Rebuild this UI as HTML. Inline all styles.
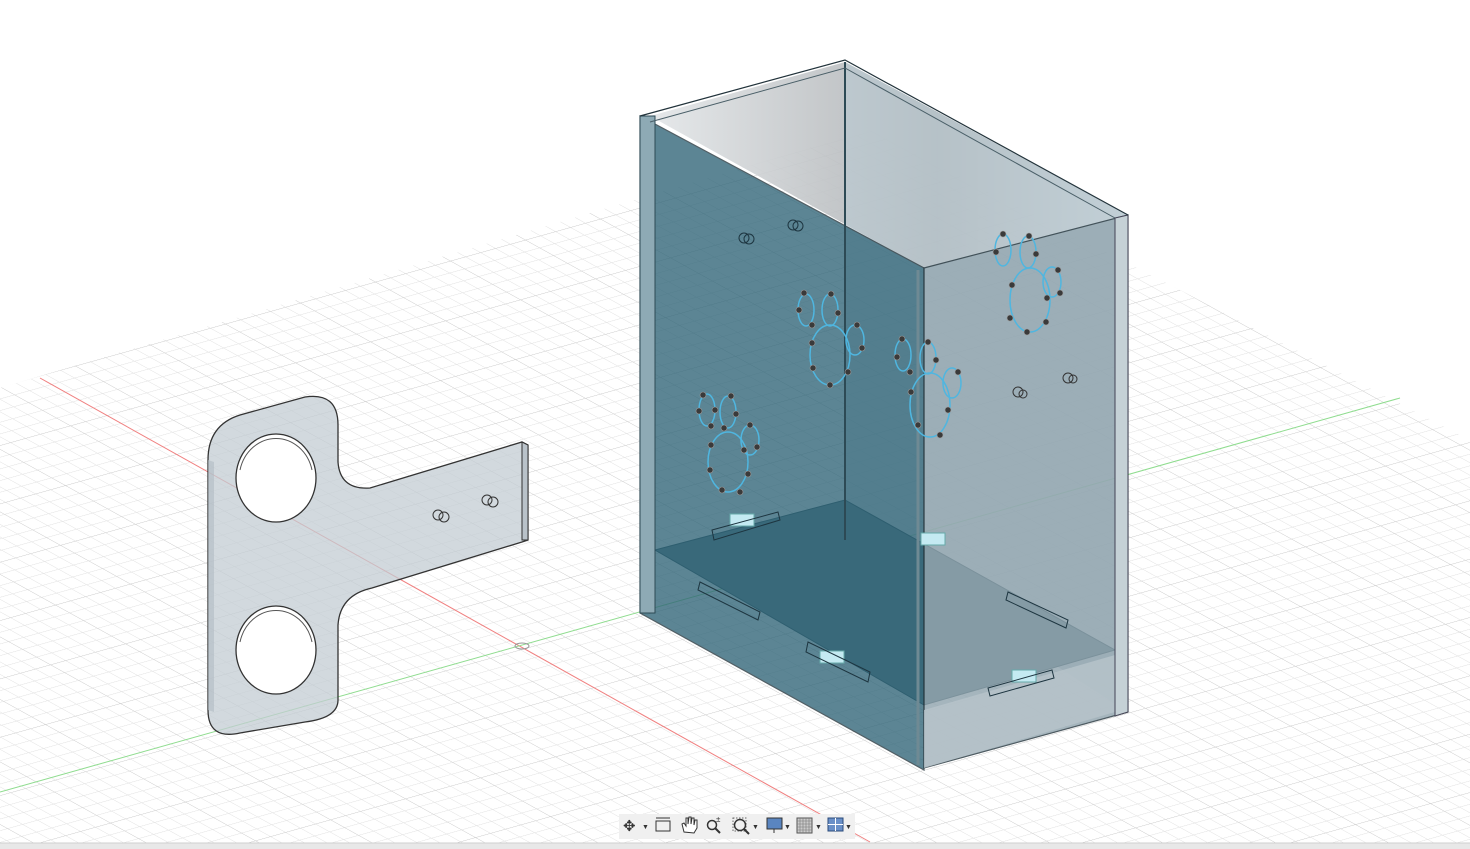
<!DOCTYPE html>
<html><head><meta charset="utf-8"><style>
html,body{margin:0;padding:0;background:#fff;width:1470px;height:849px;overflow:hidden;font-family:"Liberation Sans",sans-serif}
</style></head><body>
<svg width="1470" height="849" viewBox="0 0 1470 849" xmlns="http://www.w3.org/2000/svg" style="position:absolute;left:0;top:0">
<defs>
<pattern id="g" width="10" height="10" patternUnits="userSpaceOnUse" patternTransform="matrix(1.4,0.775,1.5,-0.42,0,387)">
<path d="M0 0H10M0 0V10" stroke="#dedede" stroke-width="0.8" fill="none"/>
</pattern>
<pattern id="G" width="50" height="50" patternUnits="userSpaceOnUse" patternTransform="matrix(1.4,0.775,1.5,-0.42,0,387)">
<path d="M0 0H50M0 0V50" stroke="#c4c4c4" stroke-width="0.5" fill="none"/>
</pattern>
<clipPath id="c"><polygon points="0,388 870,130 1470,440 1470,849 0,849"/></clipPath>
<linearGradient id="bw" x1="0" y1="0" x2="1" y2="0"><stop offset="0" stop-color="#e3e6e8"/><stop offset="0.6" stop-color="#a9adb0"/><stop offset="1" stop-color="#c9d3d8"/></linearGradient>
</defs>
<g clip-path="url(#c)">
<rect width="1470" height="849" fill="url(#g)"/>
<rect width="1470" height="849" fill="url(#G)"/>
</g>
<line x1="40" y1="378" x2="870" y2="842" stroke="#f08080" stroke-width="1"/>
<line x1="0" y1="792" x2="1400" y2="398" stroke="#8fdc8f" stroke-width="1"/>
<ellipse cx="522" cy="646" rx="7" ry="3" fill="none" stroke="#999"/>

<!-- key -->
<path d="M208 460 Q208 425 240 415 L305 397 Q338 392 338 425 L338 462 Q340 490 370 488 L522 442 L528 445 L528 540 L522 542 L372 588 Q340 595 338 625 L338 700 Q338 718 305 722 L240 733 Q208 740 208 710 Z" fill="#c3ccd3" fill-opacity="0.75" stroke="#333" stroke-width="1.3"/>
<path d="M208 460 L208 710 L214 712 L214 462 Z" fill="#b0bbc3" opacity="0.6"/>
<path d="M522 442 L528 445 L528 540 L522 540 Z" fill="#b9c2c9" stroke="#333" stroke-width="1"/>
<ellipse cx="276" cy="478" rx="40" ry="44" fill="#fff" stroke="#333" stroke-width="1.3"/>
<path d="M240 470 A37 41 0 0 1 312 470" fill="none" stroke="#555"/>
<ellipse cx="276" cy="650" rx="40" ry="44" fill="#fff" stroke="#333" stroke-width="1.3"/>
<path d="M240 642 A37 41 0 0 1 312 642" fill="none" stroke="#555"/>
<circle cx="438" cy="515" r="5" fill="none" stroke="#333"/><circle cx="444" cy="517" r="5" fill="none" stroke="#333"/>
<circle cx="487" cy="500" r="5" fill="none" stroke="#333"/><circle cx="493" cy="502" r="5" fill="none" stroke="#333"/>

<!-- box interior top -->
<polygon points="650,116 845,62 1128,215 924,268" fill="url(#bw)" opacity="0.9"/>
<polygon points="845,62 1128,215 1128,712 845,530" fill="#b9cad2" opacity="0.6"/>
<!-- floor -->
<polygon points="655,550 845,500 1115,650 924,705" fill="#5d7d88" stroke="#2d4a55"/>
<!-- left face -->
<polygon points="640,116 924,268 924,770 640,613" fill="#2f6477" opacity="0.78" stroke="#22333b" stroke-width="1.2"/>
<polygon points="640,116 655,116 655,613 640,613" fill="#8eaab5" stroke="#2d4a55"/>
<!-- right face -->
<polygon points="924,268 1128,215 1128,712 924,768" fill="#8fa3ad" opacity="0.8" stroke="#22333b" stroke-width="1.2"/>
<polygon points="924,710 1115,655 1115,712 924,768" fill="#b8c4ca" opacity="0.8"/>
<polygon points="1115,218 1128,215 1128,712 1115,716" fill="#c5d1d6" stroke="#445"/>
<line x1="845" y1="62" x2="845" y2="540" stroke="#2d4a55" stroke-width="2"/>
<polyline points="640,116 845,60 1128,215" fill="none" stroke="#22333b" stroke-width="1.2"/>
<polyline points="650,122 845,68 1115,218" fill="none" stroke="#4a5f68" stroke-width="1"/>
<line x1="918" y1="270" x2="918" y2="765" stroke="#6f8a94" stroke-width="3"/>

<!-- paws -->
<g fill="none" stroke="#4fb6e0" stroke-width="1.5">
<ellipse cx="707" cy="410" rx="8" ry="16"/><ellipse cx="728" cy="412" rx="8" ry="16"/><ellipse cx="750" cy="440" rx="9" ry="15"/><ellipse cx="728" cy="462" rx="20" ry="30"/>
<ellipse cx="806" cy="310" rx="8" ry="16"/><ellipse cx="830" cy="310" rx="8" ry="16"/><ellipse cx="855" cy="340" rx="9" ry="15"/><ellipse cx="830" cy="355" rx="20" ry="30"/>
<ellipse cx="903" cy="355" rx="8" ry="16"/><ellipse cx="928" cy="358" rx="8" ry="16"/><ellipse cx="952" cy="383" rx="9" ry="15"/><ellipse cx="930" cy="405" rx="20" ry="32"/>
<ellipse cx="1003" cy="250" rx="8" ry="16"/><ellipse cx="1028" cy="252" rx="8" ry="16"/><ellipse cx="1052" cy="282" rx="9" ry="15"/><ellipse cx="1030" cy="300" rx="20" ry="32"/>
</g>
<g fill="#3a3a3a" stroke="#999" stroke-width="0.6">
<circle cx="703" cy="395" r="3"/><circle cx="699" cy="411" r="3"/><circle cx="711" cy="426" r="3"/><circle cx="715" cy="410" r="3"/><circle cx="731" cy="396" r="3"/><circle cx="736" cy="414" r="3"/><circle cx="724" cy="428" r="3"/><circle cx="750" cy="425" r="3"/><circle cx="757" cy="447" r="3"/><circle cx="744" cy="450" r="3"/><circle cx="711" cy="445" r="3"/><circle cx="710" cy="470" r="3"/><circle cx="722" cy="490" r="3"/><circle cx="740" cy="492" r="3"/><circle cx="748" cy="474" r="3"/>
<circle cx="804" cy="293" r="3"/><circle cx="799" cy="310" r="3"/><circle cx="812" cy="325" r="3"/><circle cx="831" cy="294" r="3"/><circle cx="838" cy="313" r="3"/><circle cx="857" cy="325" r="3"/><circle cx="862" cy="348" r="3"/><circle cx="812" cy="343" r="3"/><circle cx="813" cy="368" r="3"/><circle cx="830" cy="385" r="3"/><circle cx="848" cy="372" r="3"/>
<circle cx="902" cy="339" r="3"/><circle cx="897" cy="357" r="3"/><circle cx="910" cy="372" r="3"/><circle cx="928" cy="342" r="3"/><circle cx="936" cy="360" r="3"/><circle cx="958" cy="372" r="3"/><circle cx="911" cy="392" r="3"/><circle cx="918" cy="425" r="3"/><circle cx="940" cy="435" r="3"/><circle cx="948" cy="410" r="3"/>
<circle cx="1003" cy="234" r="3"/><circle cx="1029" cy="236" r="3"/><circle cx="996" cy="252" r="3"/><circle cx="1036" cy="254" r="3"/><circle cx="1058" cy="270" r="3"/><circle cx="1060" cy="293" r="3"/><circle cx="1012" cy="285" r="3"/><circle cx="1010" cy="318" r="3"/><circle cx="1027" cy="332" r="3"/><circle cx="1046" cy="322" r="3"/><circle cx="1047" cy="298" r="3"/>
</g>
<g fill="none" stroke="#1d3540"><circle cx="744" cy="238" r="5"/><circle cx="749" cy="239" r="5"/><circle cx="793" cy="225" r="5"/><circle cx="798" cy="226" r="5"/></g>
<g fill="none" stroke="#333"><circle cx="1018" cy="392" r="5"/><circle cx="1023" cy="394" r="4"/><circle cx="1068" cy="378" r="5"/><circle cx="1073" cy="379" r="4"/></g>
<g fill="#c4eaf2" stroke="#6aa"><rect x="730" y="514" width="24" height="12"/><rect x="921" y="533" width="24" height="12"/><rect x="820" y="651" width="24" height="12"/><rect x="1012" y="670" width="24" height="12"/></g>
<g fill="none" stroke="#1d3540"><polygon points="712,530 778,512 780,520 714,540"/><polygon points="700,582 760,612 758,620 698,590"/><polygon points="808,642 870,672 868,682 806,652"/><polygon points="988,688 1052,670 1054,678 990,696"/><polygon points="1008,592 1068,620 1066,628 1006,600"/></g>

<!-- toolbar -->
<rect x="619" y="814" width="236" height="25" fill="#f0f0f0"/>
<g fill="#333" stroke="none">
<text x="623" y="831" font-size="15">✥</text><text x="642" y="829" font-size="7">▼</text>
<rect x="656" y="821" width="14" height="10" fill="none" stroke="#333"/><line x1="656" y1="818" x2="670" y2="818" stroke="#333"/>
<path d="M684 832 L682 824 L684 823 L686 826 L686 818 L688 818 L688 824 L689 817 L691 817 L691 824 L692 818 L694 818 L694 825 L695 820 L697 820 L697 828 L694 833 Z" fill="#fff" stroke="#333"/>
<circle cx="712" cy="825" r="4.5" fill="none" stroke="#333" stroke-width="1.5"/><line x1="715" y1="828" x2="720" y2="833" stroke="#333" stroke-width="2"/><text x="716" y="822" font-size="8">±</text>
<rect x="733" y="818" width="13" height="13" fill="none" stroke="#666" stroke-dasharray="1.5 1.5"/>
<circle cx="740" cy="825" r="5.5" fill="none" stroke="#333" stroke-width="1.5"/><line x1="744" y1="829" x2="749" y2="834" stroke="#333" stroke-width="2"/><text x="752" y="829" font-size="7">▼</text>
<rect x="767" y="818" width="15" height="11" fill="#5a85c0" stroke="#333"/><line x1="774" y1="829" x2="774" y2="833" stroke="#333"/><text x="784" y="829" font-size="7">▼</text>
<rect x="797" y="818" width="15" height="15" fill="#ccc" stroke="#555"/>
<path d="M800 818V833M803 818V833M806 818V833M809 818V833M797 821H812M797 824H812M797 827H812M797 830H812" stroke="#777" stroke-width="0.6"/>
<text x="815" y="829" font-size="7">▼</text>
<rect x="828" y="818" width="15" height="13" fill="#6a90c8" stroke="#2a4a7a"/><line x1="835.5" y1="818" x2="835.5" y2="831" stroke="#fff"/><line x1="828" y1="824.5" x2="843" y2="824.5" stroke="#fff"/><text x="845" y="829" font-size="7">▼</text>
</g>
<rect x="0" y="843" width="1470" height="6" fill="#e8e8e8"/>
<line x1="0" y1="843" x2="1470" y2="843" stroke="#cfcfcf"/>
</svg>
</body></html>
